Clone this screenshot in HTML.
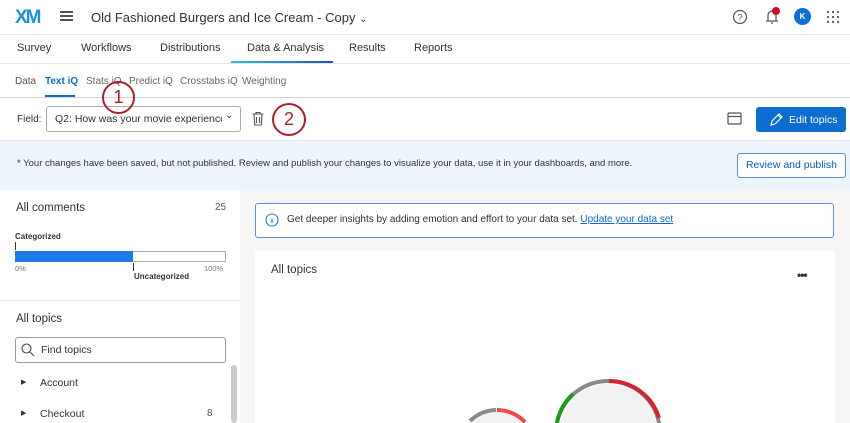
<!DOCTYPE html>
<html><head><meta charset="utf-8"><style>
*{box-sizing:border-box;margin:0;padding:0}
html,body{width:850px;height:423px;overflow:hidden}
body{font-family:"Liberation Sans",sans-serif;color:#32332e;background:#f6f6f6;position:relative;font-size:11px}
.a{position:absolute}
</style></head><body>
<div class="a" style="left:0;top:0;width:850px;height:140px;background:#fff"></div>
<div class="a" style="left:0;top:34px;width:850px;height:1px;background:#e8e8e8"></div>
<div class="a" style="left:0;top:63px;width:850px;height:1px;background:#e8e8e8"></div>
<div class="a" style="left:0;top:97px;width:850px;height:1px;background:#d4d4d4"></div>
<div class="a" style="left:15px;top:7px;font-size:19px;font-weight:bold;letter-spacing:-2px;color:#1f8fe0">XM</div>
<div class="a" style="left:60px;top:11px;width:13px;height:2px;background:#555;box-shadow:0 4px 0 #555,0 8px 0 #555"></div>
<div class="a" style="left:91px;top:10px;font-size:13px">Old Fashioned Burgers and Ice Cream - Copy <span style="font-size:10px">⌄</span></div>
<svg class="a" style="left:732px;top:9px" width="16" height="16"><circle cx="8" cy="8" r="6.5" fill="none" stroke="#555" stroke-width="1.2"/><text x="8" y="11.5" font-size="9" text-anchor="middle" fill="#555" font-family="Liberation Sans">?</text></svg>
<svg class="a" style="left:763px;top:7px" width="18" height="18"><path d="M3 14h12M5 14V8a4 4 0 018 0v6M8 16h2" fill="none" stroke="#555" stroke-width="1.2"/><circle cx="13" cy="4" r="4" fill="#c8102e"/></svg>
<div class="a" style="left:794px;top:8px;width:17px;height:17px;border-radius:50%;background:#0b6ed0;color:#fff;font-size:8px;font-weight:bold;text-align:center;line-height:17px">K</div>
<svg class="a" style="left:826px;top:10px" width="14" height="14" fill="#555"><circle cx="2" cy="2" r="1.1"/><circle cx="7" cy="2" r="1.1"/><circle cx="12" cy="2" r="1.1"/><circle cx="2" cy="7" r="1.1"/><circle cx="7" cy="7" r="1.1"/><circle cx="12" cy="7" r="1.1"/><circle cx="2" cy="12" r="1.1"/><circle cx="7" cy="12" r="1.1"/><circle cx="12" cy="12" r="1.1"/></svg>
<div class="a" style="top:42px;left:17px">Survey</div>
<div class="a" style="top:42px;left:81px">Workflows</div>
<div class="a" style="top:42px;left:160px">Distributions</div>
<div class="a" style="top:42px;left:247px">Data &amp; Analysis</div>
<div class="a" style="top:42px;left:349px">Results</div>
<div class="a" style="top:42px;left:414px">Reports</div>
<div class="a" style="left:231px;top:61px;width:102px;height:2px;background:linear-gradient(90deg,#2bc4d9,#1a4fd6)"></div>
<div class="a" style="top:76px;left:15px;font-size:10px;color:#555">Data</div>
<div class="a" style="top:76px;left:45px;font-size:10px;color:#0b6ed0;font-weight:bold">Text iQ</div>
<div class="a" style="left:45px;top:95px;width:30px;height:2px;background:#0b6ed0"></div>
<div class="a" style="top:76px;left:86px;font-size:10px;color:#666">Stats iQ</div>
<div class="a" style="top:76px;left:129px;font-size:10px;color:#666">Predict iQ</div>
<div class="a" style="top:76px;left:180px;font-size:10px;color:#666">Crosstabs iQ</div>
<div class="a" style="top:76px;left:242px;font-size:10px;color:#666">Weighting</div>
<div class="a" style="top:114px;left:17px;font-size:10px">Field:</div>
<div class="a" style="left:46px;top:106px;width:195px;height:26px;border:1px solid #aaa;border-radius:3px;background:#fff"></div>
<div class="a" style="left:55px;top:113px;width:167px;font-size:10.5px;white-space:nowrap;overflow:hidden">Q2: How was your movie experience today?</div>
<div class="a" style="left:225px;top:110px;font-size:10px">⌄</div>
<svg class="a" style="left:251px;top:111px" width="14" height="16"><path d="M1.5 3h11M5 3V1.5h4V3M3 3l.7 11h6.6L11 3M5.5 6v6M8.5 6v6" fill="none" stroke="#555" stroke-width="1.1"/></svg>
<div class="a" style="left:102px;top:81px;width:33px;height:33px;border:2px solid #b01e2a;border-radius:50%;font-size:18px;color:#b01e2a;text-align:center;line-height:29px">1</div>
<div class="a" style="left:272px;top:103px;width:34px;height:33px;border:2px solid #b01e2a;border-radius:50%;font-size:18px;color:#b01e2a;text-align:center;line-height:29px">2</div>
<svg class="a" style="left:727px;top:111px" width="15" height="15"><rect x="1" y="2" width="13" height="11" rx="1" fill="none" stroke="#555" stroke-width="1.2"/><path d="M1 5.5h13" stroke="#555" stroke-width="1.2"/></svg>
<div class="a" style="left:756px;top:107px;width:90px;height:25px;background:#0b6ed0;border-radius:3px;color:#fff;font-size:10.5px;padding:7px 0 0 33px">Edit topics</div>
<svg class="a" style="left:769px;top:112px" width="15" height="15"><path d="M2 13l1-4 7-7 3 3-7 7zM9 3l3 3" fill="none" stroke="#fff" stroke-width="1.2"/></svg>
<div class="a" style="left:0;top:140px;width:850px;height:50px;background:#eef4fc;border-top:1px solid #dde6f0"></div>
<div class="a" style="left:17px;top:158px;font-size:9.5px;color:#333">* Your changes have been saved, but not published. Review and publish your changes to visualize your data, use it in your dashboards, and more.</div>
<div class="a" style="left:737px;top:153px;width:109px;height:25px;border:1px solid #5b8fd6;border-radius:3px;background:#fff;color:#0b5cb8;font-size:10.5px;text-align:center;line-height:23px">Review and publish</div>
<div class="a" style="left:0;top:190px;width:240px;height:233px;background:#fff"></div>
<div class="a" style="left:0;top:300px;width:240px;height:1px;background:#ececec"></div>
<div class="a" style="left:16px;top:202px;font-size:11.5px">All comments</div>
<div class="a" style="left:215px;top:202px;font-size:10px;color:#555">25</div>
<div class="a" style="left:15px;top:232px;font-size:8px;font-weight:bold">Categorized</div>
<div class="a" style="left:15px;top:242px;width:1px;height:8px;background:#333"></div>
<div class="a" style="left:15px;top:251px;width:211px;height:11px;border:1px solid #aaa;background:#fff"></div>
<div class="a" style="left:15px;top:251px;width:118px;height:11px;background:#1f7aec"></div>
<div class="a" style="left:133px;top:263px;width:1px;height:8px;background:#333"></div>
<div class="a" style="left:15px;top:264px;font-size:7.5px;color:#777">0%</div>
<div class="a" style="left:204px;top:264px;font-size:7.5px;color:#777">100%</div>
<div class="a" style="left:134px;top:272px;font-size:8px;font-weight:bold">Uncategorized</div>
<div class="a" style="left:16px;top:313px;font-size:11.5px">All topics</div>
<div class="a" style="left:15px;top:337px;width:211px;height:26px;border:1px solid #999;border-radius:3px;padding:6px 0 0 25px;font-size:10.5px">Find topics</div>
<svg class="a" style="left:21px;top:343px" width="14" height="14"><circle cx="5.5" cy="5.5" r="4.5" fill="none" stroke="#444" stroke-width="1.1"/><path d="M9 9l4 4" stroke="#444" stroke-width="1.1"/></svg>
<div class="a" style="left:231px;top:365px;width:6px;height:58px;background:#ccc;border-radius:3px"></div>
<div class="a" style="left:21px;top:378px;font-size:7px">▶</div>
<div class="a" style="left:40px;top:377px;font-size:10.5px">Account</div>
<div class="a" style="left:21px;top:409px;font-size:7px">▶</div>
<div class="a" style="left:40px;top:408px;font-size:10.5px">Checkout</div>
<div class="a" style="left:207px;top:408px;font-size:10px;color:#555">8</div>
<div class="a" style="left:255px;top:203px;width:579px;height:35px;border:1px solid #5b8fd6;border-radius:3px;background:#fff"></div>
<svg class="a" style="left:265px;top:213px" width="14" height="14"><circle cx="7" cy="7" r="6" fill="none" stroke="#1f7aec" stroke-width="1.1"/><path d="M7 6v4M7 4v.5" stroke="#1f7aec" stroke-width="1.3"/></svg>
<div class="a" style="left:287px;top:214px;font-size:10px">Get deeper insights by adding emotion and effort to your data set. <span style="color:#0b6ed0;text-decoration:underline">Update your data set</span></div>
<div class="a" style="left:255px;top:251px;width:580px;height:172px;background:#fff"></div>
<div class="a" style="left:271px;top:264px;font-size:11.5px">All topics</div>
<div class="a" style="left:797px;top:268px;font-size:12px;font-weight:bold;letter-spacing:-1px">•••</div>
<svg class="a" style="left:255px;top:251px" width="580" height="172">
<circle cx="353" cy="182" r="50" fill="#f2f2f2" stroke="#fff" stroke-width="2"/>
<circle cx="353" cy="182" r="52" fill="none" stroke="#8a8a8a" stroke-width="4"/>
<path d="M354 130A52 52 0 0 1 404 167" fill="none" stroke="#d5232e" stroke-width="4"/>
<path d="M318 143A52 52 0 0 0 301 182" fill="none" stroke="#1f9a1a" stroke-width="4"/>
<circle cx="242" cy="198" r="38" fill="#f2f2f2"/>
<path d="M242 159A39 39 0 0 1 270 171" fill="none" stroke="#f04a4a" stroke-width="4"/>
<path d="M241 159A39 39 0 0 0 215 170" fill="none" stroke="#8a8a8a" stroke-width="4"/>
</svg>
</body></html>
